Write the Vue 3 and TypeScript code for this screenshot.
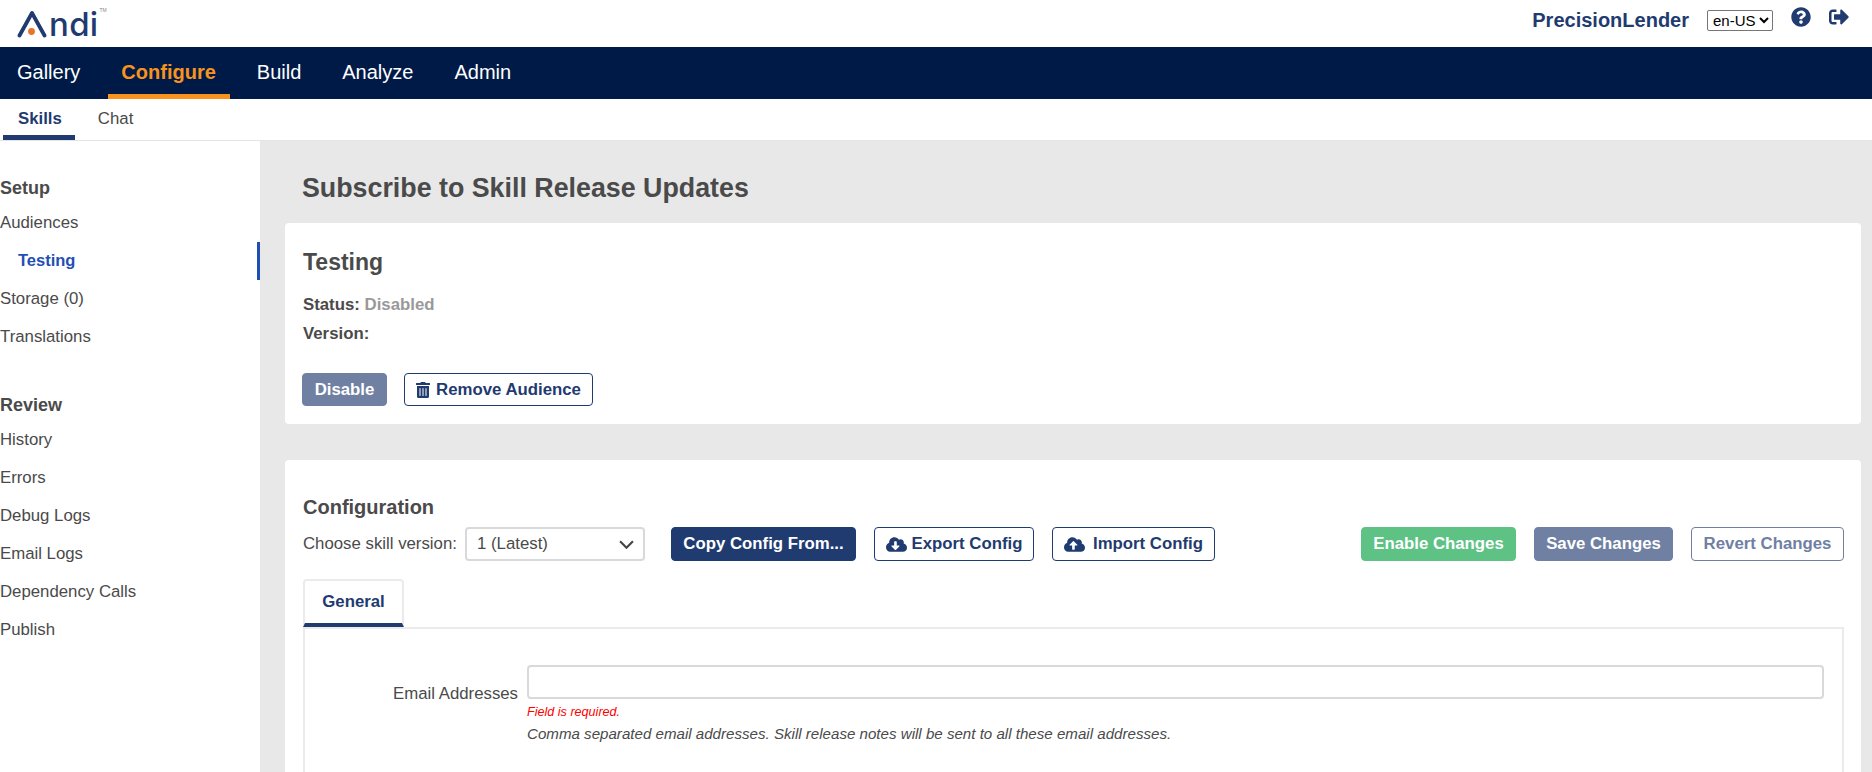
<script setup lang="ts">
const navItems = ["Gallery", "Configure", "Build", "Analyze", "Admin"];

type SideGroup = {
  title: string;
  items: { label: string; active?: boolean }[];
};

const sideGroups: SideGroup[] = [
  {
    title: "Setup",
    items: [
      { label: "Audiences" },
      { label: "Testing", active: true },
      { label: "Storage (0)" },
      { label: "Translations" },
    ],
  },
  {
    title: "Review",
    items: [
      { label: "History" },
      { label: "Errors" },
      { label: "Debug Logs" },
      { label: "Email Logs" },
      { label: "Dependency Calls" },
      { label: "Publish" },
    ],
  },
];

const cloudDown =
  "M537.6 226.6c4.1-10.7 6.4-22.4 6.4-34.6 0-53-43-96-96-96-19.7 0-38.1 6-53.3 16.2C367 64.2 315.3 32 256 32c-88.4 0-160 71.6-160 160 0 2.7.1 5.4.2 8.1C40.2 219.8 0 273.2 0 336c0 79.5 64.5 144 144 144h368c70.7 0 128-57.3 128-128 0-61.9-44-113.6-102.4-125.4zm-132.9 88.7L299.3 420.7c-6.2 6.2-16.4 6.2-22.6 0L171.3 315.3c-10.1-10.1-2.9-27.3 11.3-27.3H248V176c0-8.8 7.2-16 16-16h48c8.8 0 16 7.2 16 16v112h65.4c14.2 0 21.4 17.2 11.3 27.3z";
const cloudUp =
  "M537.6 226.6c4.1-10.7 6.4-22.4 6.4-34.6 0-53-43-96-96-96-19.7 0-38.1 6-53.3 16.2C367 64.2 315.3 32 256 32c-88.4 0-160 71.6-160 160 0 2.7.1 5.4.2 8.1C40.2 219.8 0 273.2 0 336c0 79.5 64.5 144 144 144h368c70.7 0 128-57.3 128-128 0-61.9-44-113.6-102.4-125.4zM393.4 288H328v112c0 8.8-7.2 16-16 16h-48c-8.8 0-16-7.2-16-16V288h-65.4c-14.3 0-21.4-17.2-11.3-27.3l105.4-105.4c6.2-6.2 16.4-6.2 22.6 0l105.4 105.4c10.1 10.1 2.9 27.3-11.3 27.3z";
</script>

<template>
  <div class="page">
    <header class="topbar">
      <div class="logo">
        <svg class="logo-a" viewBox="0 0 30 28" width="30" height="28">
          <path d="M2.5 25.5 L15 3 L27.5 25.5" fill="none" stroke="#1f3b70" stroke-width="3.8" stroke-linecap="round" stroke-linejoin="round" />
          <circle cx="14.5" cy="21.5" r="3.4" fill="#e8742a" />
        </svg>
        <span class="logo-text">ndi</span>
        <span class="logo-tm">TM</span>
      </div>
      <div class="top-right">
        <span class="org">PrecisionLender</span>
        <select class="lang">
          <option>en-US</option>
        </select>
        <svg class="top-icon help" viewBox="0 0 512 512" width="20" height="20">
          <path fill="#1f3b70" d="M504 256c0 136.997-111.043 248-248 248S8 392.997 8 256C8 119.083 119.043 8 256 8s248 111.083 248 248zM262.655 90c-54.497 0-89.255 22.957-116.549 63.758-3.536 5.286-2.353 12.415 2.715 16.258l34.699 26.31c5.205 3.947 12.621 3.008 16.665-2.122 17.864-22.658 30.113-35.797 57.303-35.797 20.429 0 45.698 13.148 45.698 32.958 0 14.976-12.363 22.667-32.534 33.976C247.128 238.528 216 254.941 216 296v4c0 6.627 5.373 12 12 12h56c6.627 0 12-5.373 12-12v-1.333c0-28.462 83.186-29.647 83.186-106.667 0-58.002-60.165-102-116.531-102zM256 338c-25.365 0-46 20.635-46 46 0 25.364 20.635 46 46 46s46-20.636 46-46c0-25.365-20.635-46-46-46z" />
        </svg>
        <svg class="top-icon signout" viewBox="0 0 512 512" width="20" height="20">
          <path fill="#1f3b70" d="M497 273L329 441c-15 15-41 4.5-41-17v-96H152c-13.3 0-24-10.7-24-24v-96c0-13.3 10.7-24 24-24h136V88c0-21.4 25.9-32 41-17l168 168c9.3 9.4 9.3 24.6 0 34zM192 436v-40c0-6.6-5.4-12-12-12H96c-17.7 0-32-14.3-32-32V160c0-17.7 14.3-32 32-32h84c6.6 0 12-5.4 12-12V76c0-6.6-5.4-12-12-12H96c-53 0-96 43-96 96v192c0 53 43 96 96 96h84c6.6 0 12-5.4 12-12z" />
        </svg>
      </div>
    </header>

    <nav class="mainnav">
      <a v-for="item in navItems" :key="item" class="mainnav-item" :class="{ active: item === 'Configure' }">{{ item }}</a>
    </nav>

    <nav class="subnav">
      <a class="subnav-item active">Skills</a>
      <a class="subnav-item">Chat</a>
    </nav>

    <div class="body">
      <aside class="sidebar">
        <section v-for="group in sideGroups" :key="group.title" class="side-group">
          <h3 class="side-title">{{ group.title }}</h3>
          <a v-for="item in group.items" :key="item.label" class="side-item" :class="{ active: item.active }">{{ item.label }}</a>
        </section>
      </aside>

      <main class="content">
        <h1 class="page-title">Subscribe to Skill Release Updates</h1>

        <section class="card card-audience">
          <h2 class="card-title">Testing</h2>
          <div class="meta"><b>Status:</b> <b class="muted">Disabled</b></div>
          <div class="meta meta-version"><b>Version:</b></div>
          <div class="audience-actions">
            <button class="btn btn-disabled btn-disable">Disable</button>
            <button class="btn btn-outline btn-remove">
              <svg viewBox="0 0 448 512" width="14" height="16">
                <path fill="#1f3b70" d="M32 464a48 48 0 0 0 48 48h288a48 48 0 0 0 48-48V128H32zm272-256a16 16 0 0 1 32 0v224a16 16 0 0 1-32 0zm-96 0a16 16 0 0 1 32 0v224a16 16 0 0 1-32 0zm-96 0a16 16 0 0 1 32 0v224a16 16 0 0 1-32 0zM432 32H312l-9.4-18.7A24 24 0 0 0 281.1 0H166.8a23.72 23.72 0 0 0-21.4 13.3L136 32H16A16 16 0 0 0 0 48v32a16 16 0 0 0 16 16h416a16 16 0 0 0 16-16V48a16 16 0 0 0-16-16z" />
              </svg>
              Remove Audience
            </button>
          </div>
        </section>

        <section class="card card-config">
          <h3 class="config-title">Configuration</h3>
          <div class="toolbar">
            <label class="version-label">Choose skill version:</label>
            <div class="version-select">
              <span>1 (Latest)</span>
              <svg viewBox="0 0 14 8" width="15" height="9">
                <path d="M1 1 L7 7 L13 1" fill="none" stroke="#444" stroke-width="2" />
              </svg>
            </div>
            <button class="btn btn-solid btn-copy">Copy Config From...</button>
            <button class="btn btn-outline btn-export">
              <svg viewBox="0 0 640 512" width="21" height="17"><path fill="#1f3b70" :d="cloudDown" /></svg>
              Export Config
            </button>
            <button class="btn btn-outline btn-import">
              <svg viewBox="0 0 640 512" width="21" height="17"><path fill="#1f3b70" :d="cloudUp" /></svg>
              Import Config
            </button>
            <div class="toolbar-spacer" />
            <button class="btn btn-green">Enable Changes</button>
            <button class="btn btn-disabled btn-save">Save Changes</button>
            <button class="btn btn-revert">Revert Changes</button>
          </div>

          <div class="tabs">
            <a class="tab">General</a>
          </div>
          <div class="tab-panel">
            <div class="field">
              <label class="field-label">Email Addresses</label>
              <div class="field-body">
                <input class="field-input" type="text" />
                <div class="field-error">Field is required.</div>
                <div class="field-help">Comma separated email addresses. Skill release notes will be sent to all these email addresses.</div>
              </div>
            </div>
          </div>
        </section>
      </main>
    </div>
  </div>
</template>

<style>
html,
body {
  margin: 0;
  overflow: hidden;
}
</style>

<style scoped>
.page {
  height: 772px;
  overflow: hidden;
  display: flex;
  flex-direction: column;
  font-family: "Liberation Sans", Arial, sans-serif;
  font-size: 16.8px;
  color: #4a4a4a;
  background: #fff;
}

.topbar {
  height: 47px;
  flex: none;
  display: flex;
  align-items: flex-start;
  justify-content: space-between;
  padding: 0 23px 0 17px;
  box-sizing: border-box;
}

.logo {
  display: flex;
  align-items: flex-start;
  height: 47px;
  padding-top: 10px;
  box-sizing: border-box;
}

.logo-a {
  display: block;
}

.logo-text {
  font-family: Inter, sans-serif;
  font-weight: 500;
  font-size: 33px;
  line-height: 28px;
  color: #1f3b70;
  letter-spacing: 0.3px;
  margin-left: 2px;
}

.logo-tm {
  font-size: 5px;
  line-height: 6px;
  color: #888;
  margin-top: -3px;
  margin-left: 1px;
}

.top-right {
  display: flex;
  align-items: flex-start;
}

.org {
  font-size: 20px;
  font-weight: 700;
  color: #1f3b70;
  line-height: 23px;
  margin-top: 9px;
}

.lang {
  width: 66px;
  height: 21px;
  margin: 10px 0 0 18px;
  padding: 0 0 0 1px;
  font-family: "Liberation Sans", Arial, sans-serif;
  font-size: 15px;
  color: #000;
  background: #fff;
  border: 1px solid #767676;
  border-radius: 2px;
}

.top-icon {
  display: block;
}

.help {
  margin: 7px 0 0 18px;
}

.signout {
  margin: 7px 0 0 18px;
}

.mainnav {
  height: 52px;
  flex: none;
  display: flex;
  gap: 13px;
  padding-left: 3px;
  background: #001a47;
}

.mainnav-item {
  padding: 0 14px;
  font-size: 20px;
  line-height: 50px;
  color: #fff;
  border-bottom: 5px solid transparent;
  height: 47px;
}

.mainnav-item.active {
  font-weight: 700;
  color: #f7931e;
  border-bottom-color: #f7931e;
  margin-left: 1px;
  padding-left: 13px;
}

.subnav {
  height: 42px;
  flex: none;
  box-sizing: border-box;
  display: flex;
  gap: 9px;
  padding-left: 3px;
  border-bottom: 1px solid #e4e4e4;
}

.subnav-item {
  padding: 0 13px 0 14px;
  line-height: 40px;
  height: 41px;
  box-sizing: border-box;
}

.subnav-item.active {
  padding: 0 13px 0 15px;
  font-weight: 700;
  color: #1f3b70;
  border-bottom: 5px solid #1f3b70;
}

.body {
  flex: 1;
  display: flex;
  min-height: 0;
}

.sidebar {
  width: 260px;
  flex: none;
  box-sizing: border-box;
  padding-top: 35px;
  background: #fff;
}

.side-group {
  margin-bottom: 37px;
}

.side-title {
  margin: 0 0 4px;
  font-size: 18px;
  font-weight: 700;
  line-height: 24px;
  color: #4a4a4a;
}

.side-item {
  display: block;
  height: 38px;
  line-height: 38px;
  font-size: 16.8px;
  color: #4a4a4a;
}

.side-item.active {
  padding-left: 18px;
  font-size: 16.5px;
  line-height: 36px;
  font-weight: 700;
  color: #1f4fb5;
  border-right: 3px solid #1f4fb5;
}

.content {
  flex: 1;
  min-width: 0;
  box-sizing: border-box;
  padding: 0 11px 0 25px;
  background: #e8e8e8;
  overflow: hidden;
}

.page-title {
  margin: 32px 0 20px 17px;
  font-size: 26.8px;
  font-weight: 700;
  line-height: 30px;
  color: #4a4a4a;
}

.card {
  background: #fff;
  border-radius: 4px;
  padding: 0 17px 0 18px;
}

.card-audience {
  height: 201px;
  box-sizing: border-box;
  padding-top: 25px;
  margin-bottom: 36px;
}

.card-title {
  margin: 0;
  font-size: 23px;
  font-weight: 700;
  line-height: 28px;
  color: #4a4a4a;
}

.meta {
  margin-top: 17px;
  line-height: 24px;
}

.meta-version {
  margin-top: 5px;
}

.muted {
  color: #999;
}

.audience-actions {
  display: flex;
  gap: 17px;
  margin: 27px 0 0 -1px;
}

.audience-actions .btn {
  height: 33px;
}

.btn {
  display: inline-flex;
  align-items: center;
  justify-content: center;
  gap: 5px;
  height: 34px;
  padding: 0;
  box-sizing: border-box;
  font-family: "Liberation Sans", Arial, sans-serif;
  font-size: 16.8px;
  font-weight: 700;
  border-radius: 4px;
  border: 1px solid transparent;
}

.btn-disabled {
  background: #6f80a3;
  color: #fff;
  border-color: #6f80a3;
}

.btn-outline {
  background: #fff;
  color: #1f3b70;
  border-color: #1f3b70;
}

.btn-solid {
  background: #1f3b70;
  color: #fff;
  border-color: #1f3b70;
}

.btn-green {
  width: 155px;
  margin-right: 18px;
  background: #5ec285;
  color: #fff;
  border-color: #5ec285;
}

.btn-revert {
  width: 153px;
  background: #fff;
  color: #6f80a3;
  border-color: #6f80a3;
}

.btn-disable {
  width: 85px;
}

.btn-remove {
  width: 189px;
  gap: 6px;
}

.btn-copy {
  width: 185px;
  margin-right: 18px;
}

.btn-export {
  width: 160px;
  margin-right: 18px;
}

.btn-import {
  width: 163px;
  gap: 8px;
}

.btn-save {
  width: 139px;
  margin-right: 18px;
}

.card-config {
  padding-top: 35px;
}

.config-title {
  margin: 0;
  font-size: 20px;
  font-weight: 700;
  line-height: 24px;
  color: #4a4a4a;
}

.toolbar {
  display: flex;
  align-items: center;
  margin-top: 8px;
}

.version-label {
  width: 162px;
  flex: none;
  white-space: nowrap;
}

.version-select {
  width: 180px;
  height: 34px;
  box-sizing: border-box;
  flex: none;
  display: flex;
  align-items: center;
  justify-content: space-between;
  padding: 0 9px 0 10px;
  margin-right: 26px;
  border: 2px solid #d9d9d9;
  border-radius: 4px;
}

.toolbar-spacer {
  flex: 1;
}

.tabs {
  display: flex;
  margin-top: 18px;
}

.tab {
  width: 101px;
  height: 48px;
  box-sizing: border-box;
  text-align: center;
  line-height: 42px;
  font-weight: 700;
  color: #1f3b70;
  border: 2px solid #ebebeb;
  border-bottom: 4px solid #1f3b70;
  border-radius: 4px 4px 0 0;
}

.tab-panel {
  height: 200px;
  border: 2px solid #ebebeb;
  padding: 36px 18px 0 0;
}

.field {
  display: flex;
  align-items: flex-start;
}

.field-label {
  width: 213px;
  flex: none;
  text-align: right;
  line-height: 34px;
  margin-top: 12px;
}

.field-body {
  flex: 1;
  min-width: 0;
  margin-left: 9px;
}

.field-input {
  display: block;
  width: 100%;
  height: 34px;
  box-sizing: border-box;
  border: 2px solid #d9d9d9;
  border-radius: 4px;
  background: #fff;
  outline: none;
}

.field-error {
  margin-top: 6px;
  font-size: 12.6px;
  line-height: 14px;
  font-style: italic;
  color: #f00;
}

.field-help {
  margin-top: 6px;
  font-size: 15.12px;
  line-height: 18px;
  font-style: italic;
  color: #4a4a4a;
}
</style>
